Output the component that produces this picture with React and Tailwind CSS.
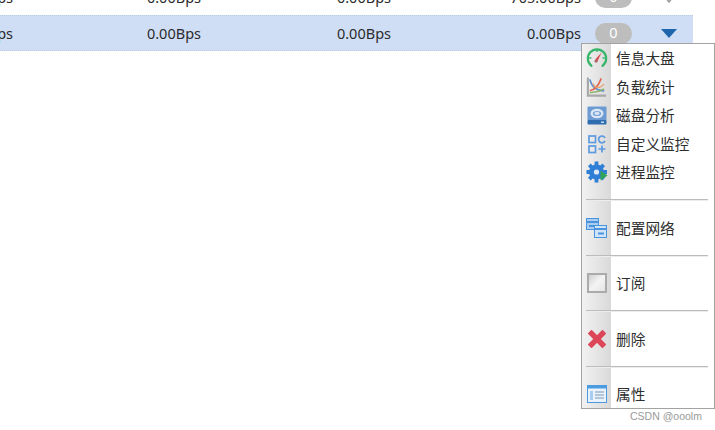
const font = { fontFamily: '"Noto Sans", "Noto Sans CJK SC", sans-serif' };

function Gauge() {
  return (
    <svg width="22" height="22" viewBox="0 0 24 24" fill="none">
      <path d="M6 20.5A10 10 0 1 1 18 20.5" stroke="#35b56a" strokeWidth="2.4" strokeLinecap="round" />
      <path d="M12 3v2.4M3.5 12h2.4M20.5 12h-2.4" stroke="#35b56a" strokeWidth="1.4" />
      <path d="M17 6 10 13.5 12.6 15.6Z" fill="#dc4a50" />
      <circle cx="11" cy="15.5" r="1.6" fill="#a9656a" />
    </svg>
  );
}
function Chart() {
  return (
    <svg width="21" height="22" viewBox="0 0 22 22" fill="none">
      <path d="M2 1v19h19" stroke="#a8a8a8" strokeWidth="2.2" />
      <path d="M4 3c2 8 7 12 15 12" stroke="#5b8fd0" strokeWidth="1.7" />
      <path d="M4 15c5-1 9-5 12-13" stroke="#e0674f" strokeWidth="1.7" />
      <path d="M4 17c4-1 9 0 15-4" stroke="#8cb56d" strokeWidth="1.5" />
      <path d="M7 7c3 6 7 6 12 1" stroke="#e9a26e" strokeWidth="1.4" />
    </svg>
  );
}
function Disk() {
  return (
    <svg width="20" height="19" viewBox="0 0 20 19" fill="none">
      <rect x="0.5" y="0.5" width="19" height="14" rx="1" fill="#6b9bd2" />
      <ellipse cx="10" cy="7.5" rx="6.5" ry="4.8" fill="#dbe7f5" />
      <ellipse cx="10" cy="7.5" rx="4.2" ry="2.6" fill="#7da7d8" />
      <ellipse cx="10" cy="7.5" rx="2.6" ry="1.4" fill="#dbe7f5" />
      <rect x="0.5" y="14" width="19" height="4.5" rx="1" fill="#2f6cb0" />
      <rect x="14" y="15.5" width="3" height="1.4" fill="#cfe0f3" />
    </svg>
  );
}
function Custom() {
  return (
    <svg width="20" height="20" viewBox="0 0 20 20" fill="none" stroke="#5d9ae0" strokeWidth="1.7">
      <rect x="2" y="2" width="6.5" height="6.5" />
      <rect x="2" y="12" width="6.5" height="6.5" />
      <path d="M18 3.8A3.4 3.4 0 1 0 18 7" />
      <path d="M15 11.5v7M11.5 15h7" />
    </svg>
  );
}
function Gear() {
  return (
    <svg width="22" height="22" viewBox="0 0 22 22">
      <circle cx="10.5" cy="11" r="7.6" fill="#2f7fd6" />
      <circle cx="10.5" cy="11" r="2.6" fill="#dfeaf7" />
      <g stroke="#2f7fd6" strokeWidth="3.8">
        <path d="M10.5 0.5v4M10.5 17.5v4M0.5 11h4M16.5 11h4.5M3.3 3.8l3 3M14.7 15.2l3 3M17.7 3.8l-3 3M6.3 15.2l-3 3" />
      </g>
      <path d="M14.5 9.5 21.5 14.5 14.5 19.5Z" fill="#2fa35a" />
    </svg>
  );
}
function Network() {
  return (
    <svg width="21" height="20" viewBox="0 0 21 20" fill="none">
      <rect x="0.5" y="0.5" width="12" height="11" fill="#a9cdf0" stroke="#4b94dd" />
      <path d="M1 4h11" stroke="#4b94dd" strokeWidth="2" />
      <rect x="3" y="7" width="5" height="2" fill="#4b94dd" />
      <rect x="8.5" y="7.5" width="12" height="12" fill="#cfe4f8" stroke="#4b94dd" />
      <path d="M9 11h11" stroke="#4b94dd" strokeWidth="2" />
      <rect x="12" y="14.5" width="6" height="2" fill="#4b94dd" />
    </svg>
  );
}
function Cross() {
  return (
    <svg width="18" height="18" viewBox="0 0 18 18" fill="none">
      <path d="M3.5 3.5 14.5 14.5M14.5 3.5 3.5 14.5" stroke="#dc4658" strokeWidth="5.4" strokeLinecap="square" />
    </svg>
  );
}
function Props() {
  return (
    <svg width="20" height="18" viewBox="0 0 20 18" fill="none">
      <rect x="0.5" y="0.5" width="19" height="17" fill="#eaf3fb" stroke="#4b9be0" />
      <rect x="0" y="0" width="20" height="3.5" fill="#4b9be0" />
      <rect x="3" y="6" width="3" height="9" fill="#a9cdf0" />
      <path d="M8 7h9M8 10h9M8 13h9" stroke="#9fb8cf" strokeWidth="1.4" />
    </svg>
  );
}
function Check() {
  return (
    <div className="w-[20px] h-[20px] border-2 border-[#ababab] bg-gradient-to-br from-[#d0d0d0] via-[#f4f4f4] to-[#e4e4e4]" />
  );
}

function Row({ first, second, third, fourth, selected }) {
  return (
    <div
      className={
        selected
          ? "flex items-center h-[36px] w-[693px] bg-[#cfdef5] border-y border-dotted border-[#b7cbe8] text-[14.5px] text-[#2b2b2b]"
          : "flex items-center h-[36px] w-[693px] text-[14.5px] text-[#2b2b2b]"
      }
    >
      <div className="w-[13px] pt-[1px] flex justify-end whitespace-nowrap">{first}</div>
      <div className="w-[188px] pt-[1px] flex justify-end whitespace-nowrap">{second}</div>
      <div className="w-[190px] pt-[1px] flex justify-end whitespace-nowrap">{third}</div>
      <div className="w-[190px] pt-[1px] flex justify-end whitespace-nowrap">{fourth}</div>
      <div className="ml-[14px] w-[37px] h-[21px] rounded-full bg-[#bdbdbd] text-white flex items-center justify-center">0</div>
      {selected ? (
        <svg className="ml-[29px]" width="16" height="9" viewBox="0 0 16 9"><path d="M0 0h16L8 9Z" fill="#1f66ad" /></svg>
      ) : (
        <svg className="ml-[32px] mt-[6px]" width="10" height="6" viewBox="0 0 10 6"><path d="M1 0l4 5 4-5" fill="none" stroke="#9a9a9a" strokeWidth="1.5" /></svg>
      )}
    </div>
  );
}

function Item({ icon, label }) {
  return (
    <div className="flex items-center h-[28.5px]">
      <div className="w-[29px] flex items-center justify-center shrink-0">{icon}</div>
      <div className="ml-[5px] text-[14.7px] text-[#2e2e2e] whitespace-nowrap">{label}</div>
    </div>
  );
}
function Sep() {
  return (
    <div className="flex items-center h-[27px]">
      <div className="ml-[4px] w-[122px] h-[2px] border-t border-[#bcbcbc] bg-[#ececec]" />
    </div>
  );
}

export default function App() {
  return (
    <div className="relative w-[715px] h-[430px] bg-white overflow-hidden" style={font}>
      <div className="-mt-[21px]">
        <Row first="0.00Bps" second="0.00Bps" third="0.00Bps" fourth="705.00Bps" />
        <Row selected first="0.00Bps" second="0.00Bps" third="0.00Bps" fourth="0.00Bps" />
      </div>

      <div className="absolute left-[581px] top-[43px] w-[134px] h-[366px] border border-[#a3a3a3] bg-white flex flex-col">
        <div className="absolute left-0 top-0 bottom-0 w-[29px] bg-gradient-to-r from-[#f2f2f2] to-[#d9d9d9]" />
        <div className="relative flex flex-col">
          <Item icon={<Gauge />} label="信息大盘" />
          <Item icon={<Chart />} label="负载统计" />
          <Item icon={<Disk />} label="磁盘分析" />
          <Item icon={<Custom />} label="自定义监控" />
          <Item icon={<Gear />} label="进程监控" />
          <Sep />
          <Item icon={<Network />} label="配置网络" />
          <Sep />
          <Item icon={<Check />} label="订阅" />
          <Sep />
          <Item icon={<Cross />} label="删除" />
          <Sep />
          <Item icon={<Props />} label="属性" />
        </div>
      </div>

      <div
        className="absolute left-[630px] top-[409px] text-[10.5px] text-[#9a9a9a] whitespace-nowrap"
        style={{ fontFamily: '"Liberation Sans", sans-serif' }}
      >
        CSDN @ooolm
      </div>
    </div>
  );
}
